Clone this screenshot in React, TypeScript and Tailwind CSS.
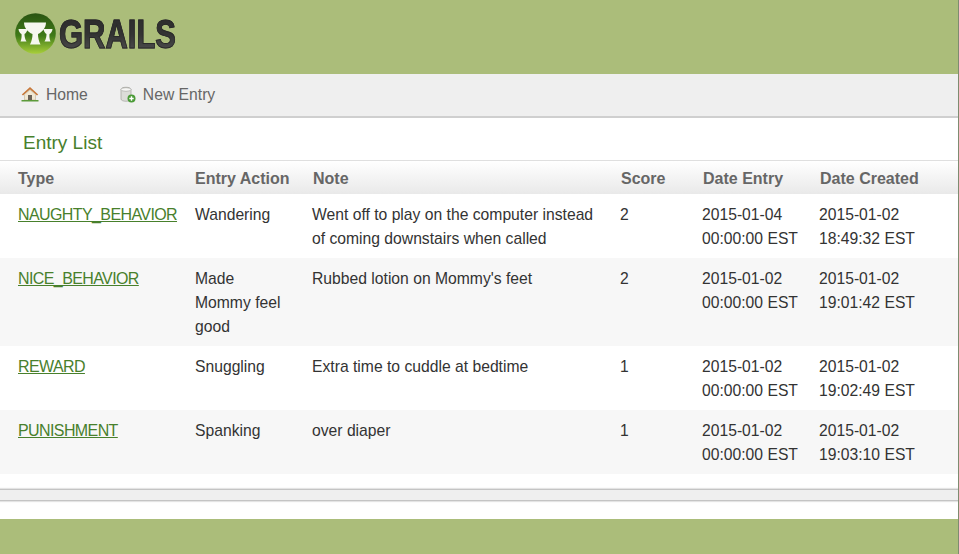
const rows = [
  {
    type: "NAUGHTY_BEHAVIOR",
    action: "Wandering",
    note: "Went off to play on the computer instead of coming downstairs when called",
    score: 2,
    entry: ["2015-01-04", "00:00:00 EST"],
    created: ["2015-01-02", "18:49:32 EST"],
  },
  {
    type: "NICE_BEHAVIOR",
    action: "Made Mommy feel good",
    note: "Rubbed lotion on Mommy's feet",
    score: 2,
    entry: ["2015-01-02", "00:00:00 EST"],
    created: ["2015-01-02", "19:01:42 EST"],
  },
  {
    type: "REWARD",
    action: "Snuggling",
    note: "Extra time to cuddle at bedtime",
    score: 1,
    entry: ["2015-01-02", "00:00:00 EST"],
    created: ["2015-01-02", "19:02:49 EST"],
  },
  {
    type: "PUNISHMENT",
    action: "Spanking",
    note: "over diaper",
    score: 1,
    entry: ["2015-01-02", "00:00:00 EST"],
    created: ["2015-01-02", "19:03:10 EST"],
  },
];

function GrailsMark() {
  return (
    <svg width="41" height="41" viewBox="0 0 41 41" className="shrink-0">
      <defs>
        <linearGradient id="ball" x1="0" y1="0" x2="0" y2="1">
          <stop offset="0" stopColor="#2a5412" />
          <stop offset="0.55" stopColor="#3f7a18" />
          <stop offset="1" stopColor="#a8cf3a" />
        </linearGradient>
      </defs>
      <circle cx="20.500" cy="20.500" r="20.300" fill="url(#ball)" />
      <path d="M9 9.500h22c0 5-3.500 9.500-8 11.500 0 3.500.8 7 2.500 10.500h-10.500c1.700-3.500 2.500-7 2.500-10.500-5-2-8.500-6.500-8.500-11.500z" fill="#f6f7ef" />
      <path d="M3.500 16h9c-.3 2.500-1.500 4-3 5 0 2.500.5 5 2 7.500h-6c1-2.500 1.300-5 1-7.500-1.700-1-2.700-2.500-3-5z" fill="#f6f7ef" />
      <path d="M28.500 16h9c-.3 2.500-1.300 4-3 5-.3 2.500 0 5 1 7.500h-6c1.500-2.500 2-5 2-7.500-1.500-1-2.700-2.500-3-5z" fill="#f6f7ef" />
    </svg>
  );
}

function HomeIcon() {
  return (
    <svg width="18" height="17" viewBox="0 0 18 17">
      <path d="M9 1L.8 8.500l1.200 1L9 3.500l7 6 1.200-1z" fill="#c8783a" />
      <path d="M3.500 8.500L9 3.800l5.500 4.700V14h-11z" fill="#f1e8d4" stroke="#b9a888" strokeWidth="0.5" />
      <rect x="7" y="9" width="4" height="5" fill="#6b6257" />
      <rect x="0.500" y="14" width="17" height="1.500" fill="#5c9a3a" />
    </svg>
  );
}

function DatabaseAddIcon() {
  return (
    <svg width="16" height="17" viewBox="0 0 16 17">
      <path d="M1 3.500c0-3 10-3 10 0v9.500c0 3-10 3-10 0z" fill="#dcdcd8" stroke="#a0a09b" strokeWidth="0.7" />
      <ellipse cx="6" cy="3.500" rx="5" ry="1.800" fill="#f6f6f4" stroke="#a0a09b" strokeWidth="0.6" />
      <circle cx="11.500" cy="12.500" r="4" fill="#4a9a36" />
      <path d="M11.500 10.300v4.400M9.300 12.500h4.400" stroke="#fff" strokeWidth="1.400" />
    </svg>
  );
}

export default function App() {
  return (
    <div className="h-[554px] bg-white border-r border-[#7e8c70] font-['Liberation_Sans',Arial,sans-serif] text-[15.7px] text-[#333] overflow-hidden flex flex-col">
      <div className="h-[74px] bg-[#abbd7a] flex items-start pl-[15px] pt-[13px]">
        <GrailsMark />
        <span className="ml-[3px] mt-[-1px] text-[41px] leading-[44px] font-bold origin-left scale-x-[0.755] [-webkit-text-stroke:1px_#2a2a2a] bg-gradient-to-b from-[#2a2a2a] via-[#333] to-[#555] bg-clip-text text-transparent">
          GRAILS
        </span>
      </div>

      <div className="h-[44px] bg-[#efefef] border-b-2 border-[#cfcfcf] flex items-center pl-[21px] text-[#666]">
        <a className="flex items-center gap-[7px]">
          <HomeIcon />
          <span>Home</span>
        </a>
        <a className="flex items-center gap-[7px] ml-[32px]">
          <DatabaseAddIcon />
          <span>New Entry</span>
        </a>
      </div>

      <h1 className="h-[42px] pl-[23px] pt-[13px] text-[19px] leading-[24px] text-[#48802c] font-normal">Entry List</h1>

      <table className="w-full table-fixed border-collapse border-t border-[#dfdfdf]">
        <colgroup>
          <col className="w-[195px]" />
          <col className="w-[117px]" />
          <col className="w-[308px]" />
          <col className="w-[82px]" />
          <col className="w-[117px]" />
          <col />
        </colgroup>
        <thead>
          <tr className="h-[33px] bg-gradient-to-b from-white to-[#e9e9e9] text-left text-[16px] text-[#666]">
            <th className="pl-[18px] pt-[4px] font-bold">Type</th>
            <th className="pt-[4px] font-bold">Entry Action</th>
            <th className="pl-[1px] pt-[4px] font-bold">Note</th>
            <th className="pl-[1px] pt-[4px] font-bold">Score</th>
            <th className="pl-[1px] pt-[4px] font-bold">Date Entry</th>
            <th className="pl-[1px] pt-[4px] font-bold">Date Created</th>
          </tr>
        </thead>
        <tbody>
          {rows.map((row, i) => (
            <tr key={row.type} className={i % 2 === 0 ? "bg-white" : "bg-[#f7f7f7]"}>
              <td className="pl-[18px] pt-[9px] pb-[7px] align-top leading-6 text-[16px] tracking-[-0.6px]">
                <a className="text-[#48802c] underline">{row.type}</a>
              </td>
              <td className="pt-[9px] pb-[7px] pr-[22px] align-top leading-6">{row.action}</td>
              <td className="pt-[9px] pb-[7px] pr-[24px] align-top leading-6">{row.note}</td>
              <td className="pt-[9px] pb-[7px] align-top leading-6">{row.score}</td>
              <td className="pt-[9px] pb-[7px] align-top leading-6">
                {row.entry[0]}
                <br />
                {row.entry[1]}
              </td>
              <td className="pt-[9px] pb-[7px] align-top leading-6">
                {row.created[0]}
                <br />
                {row.created[1]}
              </td>
            </tr>
          ))}
        </tbody>
      </table>

      <div className="mt-[15px] h-[12px] bg-[#efefef] border-y border-[#c4c4c4] shadow-[0_0_1px_1px_#e4e4e4]" />
      <div className="mt-[18px] flex-1 bg-[#abbd7a]" />
    </div>
  );
}
